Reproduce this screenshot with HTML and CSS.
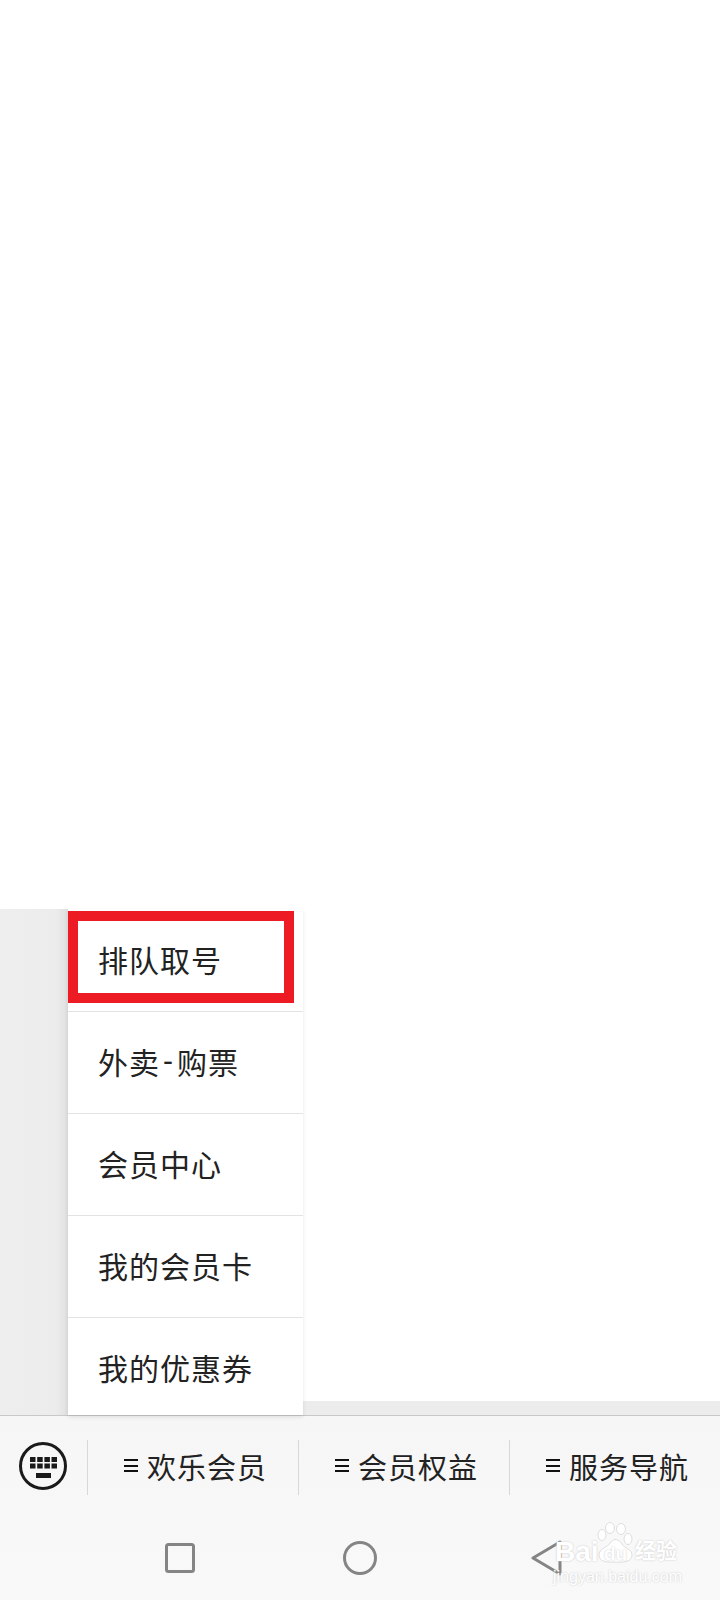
FILE: index.html
```html
<!DOCTYPE html>
<html lang="zh-CN">
<head>
    <meta charset="UTF-8">
    <meta name="viewport" content="width=device-width, initial-scale=1.0">
    <title>排队取号</title>
    <link rel="stylesheet" href="styles.css">
</head>
<body>
    <div class="page">
        <!-- Empty web view -->
        <div class="blank"></div>

        <!-- Popup menu over the chat area -->
        <section class="popup-area">
            <div class="scrim"></div>
            <div class="menu">
                <div class="mark"></div>
                <a href="#" class="menu-item">排队取号</a>
                <a href="#" class="menu-item">外卖<span class="dash">-</span>购票</a>
                <a href="#" class="menu-item">会员中心</a>
                <a href="#" class="menu-item">我的会员卡</a>
                <a href="#" class="menu-item">我的优惠券</a>
            </div>
            <div class="side">
                <div class="side-strip"></div>
            </div>
        </section>

        <!-- Bottom bar -->
        <section class="bottom">
            <div class="tabs">
                <div class="keyboard">
                    <svg width="50" height="50" viewBox="0 0 50 50">
                        <circle cx="25" cy="25" r="22.5" fill="none" stroke="#1a1a1a" stroke-width="3"/>
                        <g fill="#1a1a1a">
                            <rect x="12" y="16" width="5.5" height="5"/>
                            <rect x="19.2" y="16" width="5.5" height="5"/>
                            <rect x="26.4" y="16" width="5.5" height="5"/>
                            <rect x="33.5" y="16" width="5.5" height="5"/>
                            <rect x="12" y="22.5" width="5.5" height="5"/>
                            <rect x="19.2" y="22.5" width="5.5" height="5"/>
                            <rect x="26.4" y="22.5" width="5.5" height="5"/>
                            <rect x="33.5" y="22.5" width="5.5" height="5"/>
                            <rect x="18" y="32" width="15" height="5"/>
                        </g>
                    </svg>
                </div>
                <a href="#" class="tab"><span class="tab-icon"></span>欢乐会员</a>
                <a href="#" class="tab"><span class="tab-icon"></span>会员权益</a>
                <a href="#" class="tab"><span class="tab-icon"></span>服务导航</a>
            </div>
            <nav class="nav-keys">
                <svg width="30" height="30" viewBox="0 0 30 30">
                    <rect x="1.5" y="1.5" width="27" height="27" rx="2" fill="none" stroke="#858585" stroke-width="3"/>
                </svg>
                <svg width="34" height="34" viewBox="0 0 34 34">
                    <circle cx="17" cy="17" r="15.5" fill="none" stroke="#858585" stroke-width="3"/>
                </svg>
                <svg width="37" height="36" viewBox="0 0 37 36">
                    <path d="M35 2 L8 18 L35 34 Z" fill="none" stroke="#858585" stroke-width="3" stroke-linejoin="round"/>
                </svg>
            </nav>

            <!-- Watermark -->
            <div class="watermark">
                <svg class="paw" width="38" height="42" viewBox="0 0 38 42">
                    <g fill="#fff" stroke="#dedede" stroke-width="1">
                        <ellipse cx="5" cy="13" rx="4" ry="5.5"/>
                        <ellipse cx="13" cy="6" rx="4.5" ry="5.5"/>
                        <ellipse cx="24" cy="7" rx="4.5" ry="5.5"/>
                        <ellipse cx="31" cy="17" rx="4" ry="5.5"/>
                        <path d="M2 33 C2 26 11 26 14 20 C17 16 22 17 25 22 C28 27 35 27 35 33 C35 39 28 41 18 40 C9 41 2 39 2 33 Z"/>
                    </g>
                </svg>
                <span class="wm-bai">Bai</span>
                <span class="wm-du">du</span>
                <span class="wm-cn">经验</span>
                <span class="wm-url">jingyan.baidu.com</span>
            </div>
        </section>
    </div>
</body>
</html>
```

FILE: styles.css
```css
* {
    margin: 0;
    padding: 0;
    box-sizing: border-box;
    font-family: 'Liberation Sans', 'Noto Sans CJK SC', sans-serif;
}

body {
    background-color: #fff;
    color: #222;
}

.page {
    width: 720px;
    height: 1600px;
    display: flex;
    flex-direction: column;
    overflow: hidden;
}

.blank {
    height: 909px;
    background-color: #fff;
}

/* Popup menu */
.popup-area {
    height: 506px;
    display: flex;
}

.scrim {
    width: 68px;
    background: linear-gradient(to right, #eeeeee 0, #ececec 56px, #e0e0e0 68px);
}

.menu {
    position: relative;
    z-index: 1;
    width: 235px;
    padding-top: 1px;
    display: flex;
    flex-direction: column;
    background-color: #fff;
    box-shadow: 0 2px 4px rgba(0, 0, 0, 0.1);
}

.mark {
    position: absolute;
    left: 0;
    top: 2px;
    width: 226px;
    height: 92px;
    border: 10px solid #ed1c24;
}

.menu-item {
    height: 102px;
    padding-left: 30px;
    padding-bottom: 4px;
    display: flex;
    align-items: center;
    font-size: 30px;
    letter-spacing: 1px;
    color: #222;
    text-decoration: none;
    border-bottom: 1px solid #e3e3e3;
}

.menu-item:last-child {
    height: 97px;
    padding-top: 0;
    padding-bottom: 0;
    border-bottom: none;
}

.dash {
    padding: 0 3px;
}

.side {
    flex: 1;
    display: flex;
    flex-direction: column;
    justify-content: flex-end;
}

.side-strip {
    height: 14px;
    background-color: #ececec;
}

/* Bottom bar */
.bottom {
    position: relative;
    flex: 1;
    background: linear-gradient(to bottom, #f6f6f6, #f9f9f9);
    border-top: 1px solid #c8c8c8;
}

.tabs {
    height: 104px;
    padding-top: 24px;
    display: flex;
    align-items: flex-start;
}

.keyboard {
    width: 87px;
    height: 55px;
    padding-left: 18px;
    padding-bottom: 3px;
    display: flex;
    align-items: center;
}

.tab {
    height: 55px;
    width: 211px;
    padding-left: 5px;
    padding-bottom: 4px;
    border-left: 1px solid #d8d8d8;
    display: flex;
    align-items: center;
    justify-content: center;
    gap: 9px;
    font-size: 29px;
    letter-spacing: 1px;
    color: #222;
    text-decoration: none;
}

.tab-icon {
    width: 14px;
    height: 13px;
    border-top: 2px solid #111;
    border-bottom: 2px solid #111;
    position: relative;
}

.tab-icon::after {
    content: "";
    position: absolute;
    left: 0;
    right: 0;
    top: 3.5px;
    height: 2px;
    background-color: #111;
}

.nav-keys {
    padding-top: 20px;
    padding-left: 165px;
    display: flex;
    align-items: center;
    gap: 148px;
}

/* Watermark */
.watermark {
    position: absolute;
    left: 553px;
    top: 106px;
    width: 130px;
    height: 70px;
    color: #fff;
}

.paw {
    position: absolute;
    left: 44px;
    top: 0;
}

.wm-bai,
.wm-du,
.wm-cn {
    position: absolute;
    font-weight: 700;
    white-space: nowrap;
    text-shadow: 0 0 2px #c4c4c4;
}

.wm-bai {
    left: 2px;
    top: 16px;
    font-size: 28px;
    line-height: 28px;
}

.wm-du {
    left: 51px;
    top: 22px;
    font-size: 19px;
    line-height: 19px;
}

.wm-cn {
    left: 82px;
    top: 17px;
    font-size: 21px;
    line-height: 24px;
}

.wm-url {
    position: absolute;
    left: 0;
    top: 47px;
    font-size: 16px;
    line-height: 16px;
    white-space: nowrap;
    text-shadow: 0 0 2px #c4c4c4;
}
```
